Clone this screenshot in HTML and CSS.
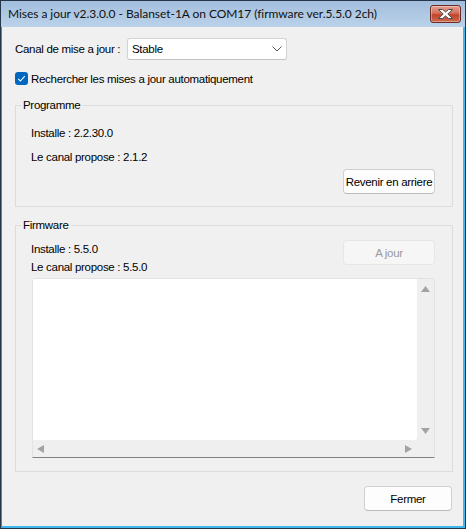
FILE: index.html
```html
<!DOCTYPE html>
<html lang="fr">
<head>
<meta charset="utf-8">
<title>Mises a jour</title>
<link rel="stylesheet" href="styles.css">
</head>
<body>
<div class="window">
  <div class="titlebar">
    <span class="title">Mises a jour v2.3.0.0 - Balanset-1A on COM17 (firmware ver.5.5.0 2ch)</span>
    <button class="close" aria-label="Fermer">
      <svg width="15" height="10" viewBox="0 0 15 10"><polygon points="0.5,0.5 4.5,0.5 7.5,3 10.5,0.5 14.5,0.5 9.8,5 14.5,9.5 10.5,9.5 7.5,7 4.5,9.5 0.5,9.5 5.2,5" fill="#fff" stroke="#4b4b4b" stroke-width="1" stroke-linejoin="round"/></svg>
    </button>
  </div>
  <div class="frame">
    <div class="channel">
      <span class="channel-label">Canal de mise a jour :</span>
      <div class="select">
        <span>Stable</span>
        <svg width="10" height="6" viewBox="0 0 10 6"><path d="M0.5 0.5 L5 5 L9.5 0.5" fill="none" stroke="#5a5a5a" stroke-width="1"/></svg>
      </div>
    </div>
    <label class="auto">
      <span class="checkbox"><svg width="13" height="13" viewBox="0 0 13 13"><path d="M3.2 6.8 L5.4 9 L9.8 4.2" fill="none" stroke="#fff" stroke-width="1.1"/></svg></span>
      <span>Rechercher les mises a jour automatiquement</span>
    </label>
    <fieldset class="group prog">
      <legend>Programme</legend>
      <div class="line first">Installe : 2.2.30.0</div>
      <div class="line second">Le canal propose : 2.1.2</div>
      <div class="actions"><button class="btn">Revenir en arriere</button></div>
    </fieldset>
    <fieldset class="group fw">
      <legend>Firmware</legend>
      <div class="fwtop">
        <div class="info">
          <div class="line">Installe : 5.5.0</div>
          <div class="line second">Le canal propose : 5.5.0</div>
        </div>
        <button class="btn disabled" disabled>A jour</button>
      </div>
      <div class="log">
        <div class="log-text"></div>
        <div class="vscroll">
          <svg width="9" height="6" viewBox="0 0 9 6"><polygon points="4.5,0 9,6 0,6" fill="#a3a3a3"/></svg>
          <svg width="9" height="6" viewBox="0 0 9 6"><polygon points="0,0 9,0 4.5,6" fill="#a3a3a3"/></svg>
        </div>
        <div class="hscroll">
          <svg width="7" height="8" viewBox="0 0 7 8"><polygon points="7,0 7,8 0,4" fill="#a3a3a3"/></svg>
          <svg width="7" height="8" viewBox="0 0 7 8"><polygon points="0,0 7,4 0,8" fill="#a3a3a3"/></svg>
        </div>
        <div class="corner"></div>
      </div>
    </fieldset>
    <div class="footer"><button class="btn fermer">Fermer</button></div>
  </div>
</div>
</body>
</html>
```

FILE: styles.css
```css
* { box-sizing: border-box; }
html, body { margin: 0; padding: 0; }
body {
  width: 466px;
  height: 529px;
  font-family: "Liberation Sans", Arial, sans-serif;
  font-size: 11.5px;
  letter-spacing: -0.3px;
  line-height: 14px;
  color: #000;
  background: #f0f0f0;
}
.window {
  width: 466px;
  height: 529px;
  border: 1px solid #26364a;
  display: flex;
  flex-direction: column;
  background: #f0f0f0;
}
.titlebar {
  height: 26px;
  flex: none;
  display: flex;
  align-items: flex-start;
  padding: 0 4px 0 7px;
  background: linear-gradient(#a2bedd, #bbd2ea);
}
.title {
  flex: 1;
  font-family: Lato, "Noto Sans", sans-serif;
  font-size: 12px;
  letter-spacing: -0.05px;
  line-height: 26px;
  color: #111;
}
.close {
  margin-top: 4px;
  width: 31px;
  height: 18px;
  padding: 0;
  border: 1px solid #6b2a22;
  border-radius: 3px;
  background: linear-gradient(#e7a091 0%, #d2705c 45%, #c0432c 55%, #cf6a50 100%);
  box-shadow: inset 0 0 0 1px rgba(255,255,255,0.35);
  display: flex;
  align-items: center;
  justify-content: center;
}
.close svg { display: block; }
.frame {
  flex: 1;
  border-left: 1px solid #4f86c6;
  border-right: 2px solid #41b6ec;
  border-bottom: 2px solid #41b6ec;
  display: flex;
  flex-direction: column;
}
.channel {
  display: flex;
  align-items: center;
  height: 22px;
  margin: 11px 0 0 13px;
}
.channel-label { width: 112px; }
.select {
  width: 160px;
  height: 22px;
  background: #fff;
  border: 1px solid #d3d3d3;
  border-bottom-color: #c2c2c2;
  border-radius: 3px;
  display: flex;
  align-items: center;
  justify-content: space-between;
  padding: 0 4px 0 4px;
}
.select svg { display: block; }
.auto {
  display: flex;
  align-items: center;
  gap: 3px;
  height: 13px;
  margin: 12px 0 0 13px;
}
.checkbox {
  width: 13px;
  height: 13px;
  border-radius: 3px;
  background: #0067c0;
  display: block;
}
.checkbox svg { display: block; }
.group {
  margin: 13px 10px 0 13px;
  border: 1px solid #dcdcdc;
  padding: 0 17px 12px 5px;
  min-width: 0;
}
.group legend {
  padding: 0 2px;
  line-height: 14px;
}
.line { margin-left: 10px; line-height: 14px; }
.prog .first { margin-top: 14px; }
.prog .second { margin-top: 10px; }
.actions {
  display: flex;
  justify-content: flex-end;
  margin-top: 5px;
}
.btn {
  width: 92px;
  height: 25px;
  padding: 0;
  border: 1px solid #d0d0d0;
  border-bottom-color: #bcbcbc;
  border-radius: 4px;
  background: #fdfdfd;
  font-family: inherit;
  font-size: 11.5px;
  letter-spacing: -0.3px;
  color: #000;
}
.btn.disabled {
  background: #f6f6f6;
  border-color: #e6e6e6;
  color: #9a9a9a;
}
.fw { margin-top: 11px; padding-bottom: 13px; }
.fwtop {
  display: flex;
  justify-content: space-between;
  align-items: flex-start;
}
.info { padding-top: 10px; }
.info .line { margin-left: 10px; }
.info .second { margin-top: 4px; }
.fwtop .btn { margin-top: 8px; }
.log {
  margin: 4px 0 0 11px;
  height: 180px;
  border: 1px solid #e2e2e2;
  border-bottom: 1px solid #838383;
  border-radius: 3px 3px 0 0;
  background: #efefef;
  display: grid;
  grid-template-columns: 1fr 17px;
  grid-template-rows: 1fr 17px;
}
.log-text {
  background: #fff;
  border-bottom-right-radius: 3px;
}
.vscroll {
  display: flex;
  flex-direction: column;
  justify-content: space-between;
  align-items: center;
  padding: 7px 0 6px 0;
}
.vscroll svg, .hscroll svg { display: block; }
.hscroll {
  display: flex;
  justify-content: space-between;
  align-items: center;
  padding: 0 5px 0 4px;
}
.footer {
  display: flex;
  justify-content: flex-end;
  margin: 14px 11px 0 0;
}
.fermer { width: 88px; }
```
